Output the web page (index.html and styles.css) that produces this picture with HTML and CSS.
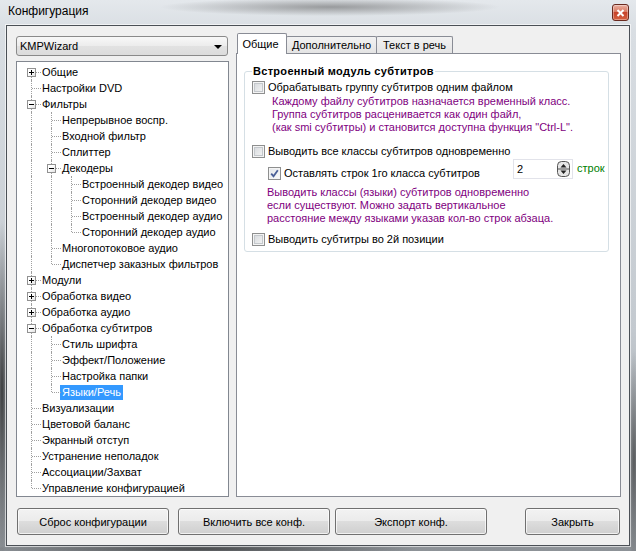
FILE: index.html
```html
<!DOCTYPE html>
<html>
    <head>
        <title>Конфигурация</title>
        <link rel="stylesheet" href="styles.css">
    </head>
    <body>
        <div class="window">
            <div class="titlebar">
                <span class="title">Конфигурация</span>
                <span class="close">
                    <svg width="9" height="8" viewBox="0 0 9 8"><path d="M1.5 1l6 6M7.5 1l-6 6" stroke="#fff" stroke-width="2"/></svg>
                </span>
            </div>

            <div class="client">
                <div class="main">
                    <div class="side">
                        <div class="combo">
                            <span>KMPWizard</span>
                            <span class="arrow"></span>
                        </div>

                        <div class="tree">
                            <div class="row"><span class="c f"><span class="pm plus"></span></span><span class="label">Общие</span></div>
                            <div class="row"><span class="c t"></span><span class="label">Настройки DVD</span></div>
                            <div class="row"><span class="c t"><span class="pm"></span></span><span class="label">Фильтры</span></div>
                            <div class="row"><span class="c v"></span><span class="c t"></span><span class="label">Непрерывное воспр.</span></div>
                            <div class="row"><span class="c v"></span><span class="c t"></span><span class="label">Входной фильтр</span></div>
                            <div class="row"><span class="c v"></span><span class="c t"></span><span class="label">Сплиттер</span></div>
                            <div class="row"><span class="c v"></span><span class="c t"><span class="pm"></span></span><span class="label">Декодеры</span></div>
                            <div class="row"><span class="c v"></span><span class="c v"></span><span class="c t"></span><span class="label">Встроенный декодер видео</span></div>
                            <div class="row"><span class="c v"></span><span class="c v"></span><span class="c t"></span><span class="label">Сторонний декодер видео</span></div>
                            <div class="row"><span class="c v"></span><span class="c v"></span><span class="c t"></span><span class="label">Встроенный декодер аудио</span></div>
                            <div class="row"><span class="c v"></span><span class="c v"></span><span class="c l"></span><span class="label">Сторонний декодер аудио</span></div>
                            <div class="row"><span class="c v"></span><span class="c t"></span><span class="label">Многопотоковое аудио</span></div>
                            <div class="row"><span class="c v"></span><span class="c l"></span><span class="label">Диспетчер заказных фильтров</span></div>
                            <div class="row"><span class="c t"><span class="pm plus"></span></span><span class="label">Модули</span></div>
                            <div class="row"><span class="c t"><span class="pm plus"></span></span><span class="label">Обработка видео</span></div>
                            <div class="row"><span class="c t"><span class="pm plus"></span></span><span class="label">Обработка аудио</span></div>
                            <div class="row"><span class="c t"><span class="pm"></span></span><span class="label">Обработка субтитров</span></div>
                            <div class="row"><span class="c v"></span><span class="c t"></span><span class="label">Стиль шрифта</span></div>
                            <div class="row"><span class="c v"></span><span class="c t"></span><span class="label">Эффект/Положение</span></div>
                            <div class="row"><span class="c v"></span><span class="c t"></span><span class="label">Настройка папки</span></div>
                            <div class="row"><span class="c v"></span><span class="c l"></span><span class="label selected">Языки/Речь</span></div>
                            <div class="row"><span class="c t"></span><span class="label">Визуализации</span></div>
                            <div class="row"><span class="c t"></span><span class="label">Цветовой баланс</span></div>
                            <div class="row"><span class="c t"></span><span class="label">Экранный отступ</span></div>
                            <div class="row"><span class="c t"></span><span class="label">Устранение неполадок</span></div>
                            <div class="row"><span class="c t"></span><span class="label">Ассоциации/Захват</span></div>
                            <div class="row"><span class="c l"></span><span class="label">Управление конфигурацией</span></div>
                        </div>
                    </div>

                    <div class="tabs">
                        <div class="tabbar">
                            <div class="tab active">Общие</div>
                            <div class="tab tab-more">Дополнительно</div>
                            <div class="tab tab-speech">Текст в речь</div>
                        </div>
                        <div class="panel">
                            <fieldset class="group">
                                <legend>Встроенный модуль субтитров</legend>

                                <div class="chk first"><span class="box"></span>Обрабатывать группу субтитров одним файлом</div>
                                <div class="note note-one">Каждому файлу субтитров назначается временный класс.<br>Группа субтитров расценивается как один файл,<br>(как smi субтитры) и становится доступна функция "Ctrl-L".</div>

                                <div class="chk second"><span class="box"></span>Выводить все классы субтитров одновременно</div>
                                <div class="spin-row">
                                    <div class="chk keep"><span class="box checked">
                                        <svg width="9" height="9" viewBox="0 0 9 9"><path d="M1.2 4.6l2.3 2.6 4.3-6" fill="none" stroke="#4a5f97" stroke-width="1.8"/></svg>
                                    </span>Оставлять строк 1го класса субтитров</div>
                                    <div class="spin">
                                        <span>2</span>
                                        <svg class="spin-btn" width="13" height="16" viewBox="0 0 13 16">
                                            <rect x=".5" y=".5" width="12" height="15" rx="4" fill="#e6e6e6" stroke="#555"/>
                                            <path d="M1 8h11" stroke="#555"/>
                                            <path d="M3.5 6.5l3-3.5 3 3.5z M3.5 9.5l3 3.5 3-3.5z" fill="#222"/>
                                        </svg>
                                    </div>
                                    <span class="unit">строк</span>
                                </div>
                                <div class="note note-two">Выводить классы (языки) субтитров одновременно<br>если существуют. Можно задать вертикальное<br>расстояние между языками указав кол-во строк абзаца.</div>

                                <div class="chk last"><span class="box"></span>Выводить субтитры во 2й позиции</div>
                            </fieldset>
                        </div>
                    </div>
                </div>

                <div class="buttons">
                    <button class="btn">Сброс конфигурации</button>
                    <button class="btn btn-all">Включить все конф.</button>
                    <button class="btn btn-export">Экспорт конф.</button>
                    <button class="btn btn-close">Закрыть</button>
                </div>
            </div>
        </div>
    </body>
</html>
```

FILE: styles.css
```css
body { margin: 0; font-family: "Liberation Sans", Arial, sans-serif; font-size: 11px; color: #000; }

.window {
    width: 636px; height: 551px; display: flex; flex-direction: column; overflow: hidden;
    background:
        radial-gradient(ellipse 170px 9px at 330px 7px, rgba(80, 80, 80, .5), transparent),
        radial-gradient(ellipse 8px 170px at 2px 390px, rgba(30, 30, 30, .8), transparent),
        radial-gradient(ellipse 7px 110px at 634px 460px, rgba(40, 40, 40, .6), transparent),
        radial-gradient(ellipse 220px 6px at 200px 549px, rgba(30, 30, 30, .6), transparent),
        linear-gradient(#e4e8ec 0, #d9dee3 30px, #c3c9cf 60%, #8d9297 100%);
}

.titlebar { height: 25px; display: flex; align-items: flex-start; flex: none; }
.title { font-size: 12px; line-height: 25px; padding-left: 8px; margin-top: -1px; }
.close {
    margin: 4px 7px 0 auto; width: 17px; height: 17px; box-sizing: border-box;
    border: 1px solid #6a2a1f; border-radius: 3px;
    background: linear-gradient(#eab0a2 0, #d97a62 45%, #c7432a 50%, #d5603f 100%);
    box-shadow: inset 0 0 0 1px rgba(255, 255, 255, .35);
    display: flex; align-items: center; justify-content: center;
}

.client {
    flex: 1; margin: 0 6px 5px; border: 1px solid #4b5056; background: #f0f0f0;
    box-shadow: 0 0 0 1px rgba(255, 255, 255, .6);
    padding: 6px 8px 10px 9px; display: flex; flex-direction: column;
}

.main { display: flex; height: 465px; }

.side { width: 213px; margin-right: 7px; padding-top: 4px; display: flex; flex-direction: column; }
.combo {
    width: 212px; height: 20px; box-sizing: border-box; border: 1px solid #8a8a8a; border-radius: 3px;
    background: linear-gradient(#f8f8f8, #ececec 50%, #e2e2e2 50%, #dcdcdc);
    display: flex; align-items: center; padding-left: 3px;
}
.arrow { margin: 1px 5px 0 auto; border-left: 4px solid transparent; border-right: 4px solid transparent; border-top: 4px solid #000; }

.tree {
    margin-top: 5px; height: 436px; box-sizing: border-box; border: 1px solid #828790;
    background: #fff; padding: 2px 0 0 4px;
}
.row { display: flex; height: 16px; }
.c { width: 20px; flex: none; position: relative; }
.c::before { content: ''; position: absolute; left: 10px; top: 0; bottom: 0; border-left: 1px dotted #a0a0a0; }
.c.l::before { bottom: 8px; }
.c.f::before { top: 8px; }
.c.t::after, .c.l::after, .c.f::after { content: ''; position: absolute; left: 11px; top: 8px; width: 9px; border-top: 1px dotted #a0a0a0; }
.pm {
    position: absolute; left: 6px; top: 4px; width: 9px; height: 9px; box-sizing: border-box; z-index: 1;
    border: 1px solid #919191; background: linear-gradient(135deg, #fff 40%, #e2e2e2);
}
.pm::before { content: ''; position: absolute; left: 1px; top: 3px; width: 5px; height: 1px; background: #000; }
.pm.plus::after { content: ''; position: absolute; left: 3px; top: 1px; width: 1px; height: 5px; background: #000; }
.label { line-height: 16px; padding: 0 2px; margin-left: -1px; white-space: nowrap; }
.label.selected { background: #3399ff; color: #fff; line-height: 15px; height: 15px; margin-top: 1px; }

.tabs { width: 385px; display: flex; flex-direction: column; }
.tabbar { height: 21px; display: flex; align-items: flex-end; padding-left: 1px; }
.tab {
    height: 17px; box-sizing: border-box; border: 1px solid #898c95; border-bottom: none;
    background: linear-gradient(#f2f2f2, #e4e4e4); line-height: 16px; text-align: center;
    margin-left: -1px; border-radius: 2px 2px 0 0;
}
.tab.active { width: 50px; height: 21px; margin-left: 0; margin-bottom: -1px; background: #fff; z-index: 1; line-height: 20px; padding-right: 3px; }
.tab-more { width: 91px; }
.tab-speech { width: 77px; }

.panel { flex: 1; border: 1px solid #898c95; background: #fff; }

.group {
    margin: 10px 11px 0 7px; padding: 0 0 4px 7px; border: 1px solid #d5dfe5; border-radius: 3px;
}
.group legend { font-weight: bold; line-height: 14px; padding: 0 1px; margin-left: 0; letter-spacing: .3px; }

.chk { display: flex; align-items: center; height: 16px; white-space: nowrap; }
.box {
    width: 13px; height: 13px; box-sizing: border-box; flex: none; margin-right: 3px;
    border: 1px solid #8e8f8f; background: linear-gradient(135deg, #d3d6da, #f7f7f7);
    box-shadow: inset 0 0 0 1px #f4f4f4, inset 0 0 0 2px #c4c8cc;
    display: flex; align-items: center; justify-content: center;
}
.box.checked { box-shadow: inset 0 0 0 1px #f4f4f4; background: linear-gradient(135deg, #e3e6ea, #fafafa); }
.first { margin-top: 1px; }
.note { color: #800080; line-height: 13px; white-space: nowrap; }
.note-one { padding-left: 20px; }
.second { margin-top: 9px; }
.spin-row { display: flex; align-items: flex-start; height: 20px; }
.keep { width: 245px; margin: 6px 0 0 16px; }
.spin {
    width: 60px; height: 20px; box-sizing: border-box; border: 1px solid #e2e3ea; background: #fff;
    display: flex; align-items: center; padding: 0 2px 0 3px;
}
.spin-btn { margin-left: auto; }
.unit { color: #008000; margin: 3px 0 0 4px; }
.note-two { margin-top: 7px; padding-left: 15px; }
.last { margin-top: 6px; }

.buttons { display: flex; height: 27px; margin-top: 11px; padding-left: 1px; }
.btn {
    font: 11px "Liberation Sans", Arial, sans-serif; color: #000; width: 152px; height: 27px; padding: 0;
    border: 1px solid #707070; border-radius: 3px;
    background: linear-gradient(#f2f2f2 0%, #ebebeb 50%, #dddddd 50%, #cfcfcf 100%);
    box-shadow: inset 0 0 0 1px rgba(255, 255, 255, .7);
}
.btn-all { margin-left: 9px; }
.btn-export { margin-left: 5px; }
.btn-close { width: 95px; margin-left: auto; margin-right: 1px; }
```
